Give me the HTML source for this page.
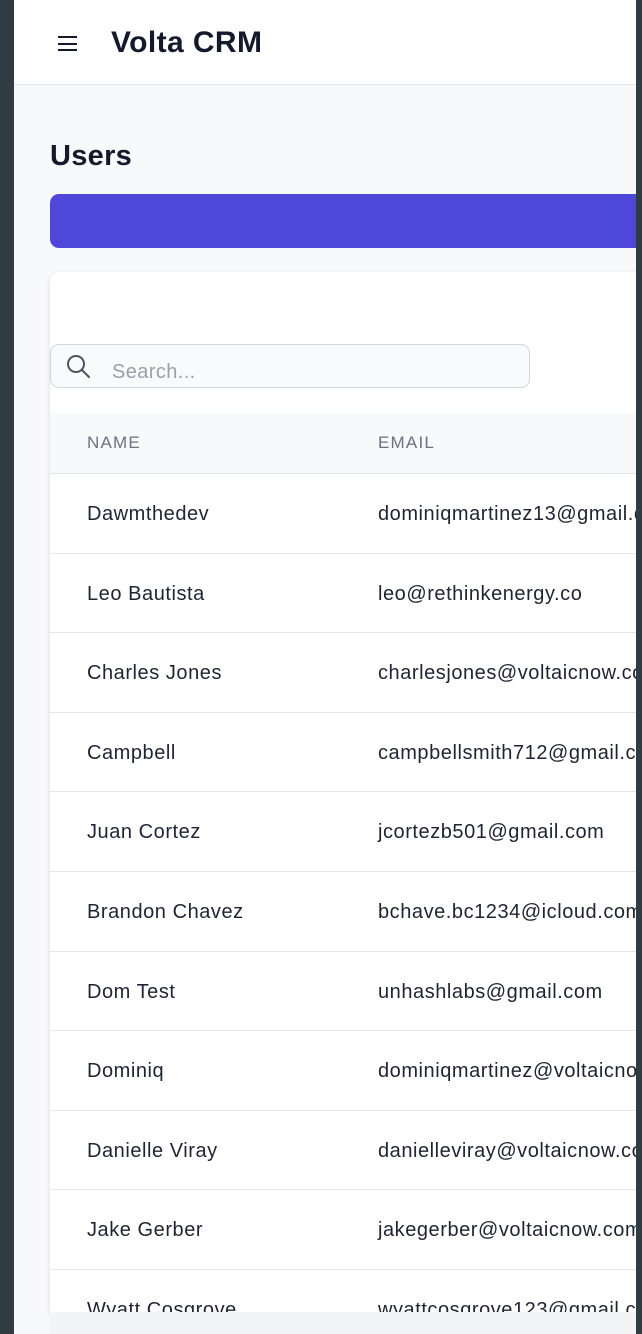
<!DOCTYPE html>
<html><head><meta charset="utf-8"><style>
*{margin:0;padding:0;box-sizing:border-box}
body{width:642px;height:1334px;overflow:hidden;background:#2f3c43;font-family:"Liberation Sans",sans-serif;position:relative}
.app{position:absolute;left:14px;top:0;width:622px;height:1334px;background:#f8f9fb;overflow:hidden}
.hdr{height:85px;background:#fff;border-bottom:1px solid #e3e6ea;position:relative}
.hdr h1{position:absolute;left:97px;top:26px;font-size:30px;font-weight:bold;color:#141a2b;letter-spacing:0.4px}
.burger{position:absolute;left:44px;top:36px;width:19px}
.burger i{display:block;height:2px;background:#141a2b;margin-bottom:4.5px}
.title{position:absolute;left:36px;top:140px;font-size:29px;font-weight:bold;color:#141a2b;letter-spacing:0.3px}
.btn{position:absolute;left:36px;top:194px;width:600px;height:54px;background:#4f46da;border-radius:9px}
.card{position:absolute;left:36px;top:272px;width:600px;height:1040px;background:#fff;border-radius:10px 0 0 0;overflow:hidden;box-shadow:0 2px 6px rgba(0,0,0,.12)}
.search{position:absolute;left:0;top:72px;width:480px;height:44px;border:1.5px solid #d3d6db;border-radius:9px;background:#f9fafb}
.search span{position:absolute;left:61px;top:16px;font-size:20px;color:#9aa0aa;letter-spacing:0.4px}
.search svg{position:absolute;left:14px;top:8px}
.thead{position:absolute;left:0;top:141px;width:600px;height:61px;background:#f8f9fb;border-bottom:1px solid #e5e7eb}
.thead span{position:absolute;top:20px;font-size:17px;color:#6b7280;letter-spacing:1.2px}
.row{position:absolute;left:0;width:600px;height:79.6px;border-bottom:1px solid #e5e7eb}
.row span{position:absolute;top:29px;font-size:20px;color:#1f2433;white-space:nowrap;letter-spacing:0.55px}
.n{left:37px}.e{left:328px}
.foot{position:absolute;left:36px;top:1312px;width:600px;height:22px;background:#f3f4f6}
</style></head><body>
<div class="app">
<div class="hdr"><div class="burger"><i></i><i></i><i></i></div><h1>Volta CRM</h1></div>
<div class="title">Users</div>
<div class="btn"></div>
<div class="card">
<div class="search"><svg width="28" height="28" viewBox="0 0 28 28"><circle cx="11" cy="11" r="8" fill="none" stroke="#4b5563" stroke-width="2"/><path d="M17 17l7 7" stroke="#4b5563" stroke-width="2" stroke-linecap="round"/></svg><span>Search...</span></div>
<div class="thead"><span style="left:37px">NAME</span><span style="left:328px">EMAIL</span></div>
<div class="row" style="top:202px"><span class="n">Dawmthedev</span><span class="e">dominiqmartinez13@gmail.com</span></div>
<div class="row" style="top:281.6px"><span class="n">Leo Bautista</span><span class="e">leo@rethinkenergy.co</span></div>
<div class="row" style="top:361.2px"><span class="n">Charles Jones</span><span class="e">charlesjones@voltaicnow.com</span></div>
<div class="row" style="top:440.8px"><span class="n">Campbell</span><span class="e">campbellsmith712@gmail.com</span></div>
<div class="row" style="top:520.4px"><span class="n">Juan Cortez</span><span class="e">jcortezb501@gmail.com</span></div>
<div class="row" style="top:600px"><span class="n">Brandon Chavez</span><span class="e">bchave.bc1234@icloud.com</span></div>
<div class="row" style="top:679.6px"><span class="n">Dom Test</span><span class="e">unhashlabs@gmail.com</span></div>
<div class="row" style="top:759.2px"><span class="n">Dominiq</span><span class="e">dominiqmartinez@voltaicnow.com</span></div>
<div class="row" style="top:838.8px"><span class="n">Danielle Viray</span><span class="e">danielleviray@voltaicnow.com</span></div>
<div class="row" style="top:918.4px"><span class="n">Jake Gerber</span><span class="e">jakegerber@voltaicnow.com</span></div>
<div class="row" style="top:998px"><span class="n">Wyatt Cosgrove</span><span class="e">wyattcosgrove123@gmail.com</span></div>
</div>
<div class="foot"></div>
</div>
</body></html>
